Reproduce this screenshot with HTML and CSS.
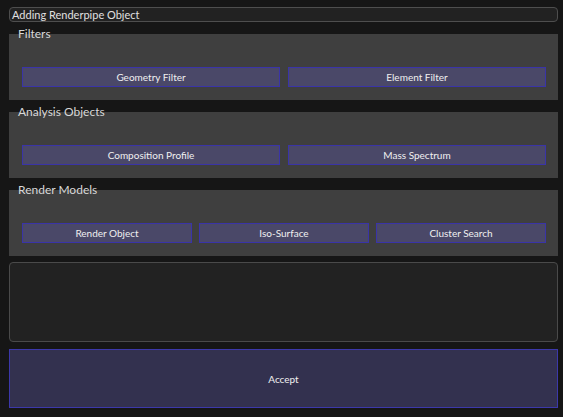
FILE: index.html
```html
<!DOCTYPE html>
<html>
<head>
<meta charset="utf-8">
<link rel="stylesheet" href="styles.css">
</head>
<body>
<div class="dialog">
  <div class="titlebar">Adding Renderpipe Object</div>
  <div class="group">
    <div class="group-label">Filters</div>
    <div class="row">
      <button class="btn">Geometry Filter</button>
      <button class="btn">Element Filter</button>
    </div>
  </div>
  <div class="group">
    <div class="group-label">Analysis Objects</div>
    <div class="row">
      <button class="btn">Composition Profile</button>
      <button class="btn">Mass Spectrum</button>
    </div>
  </div>
  <div class="group">
    <div class="group-label">Render Models</div>
    <div class="row row3">
      <button class="btn">Render Object</button>
      <button class="btn">Iso-Surface</button>
      <button class="btn">Cluster Search</button>
    </div>
  </div>
  <div class="textbox"></div>
  <button class="accept">Accept</button>
</div>
</body>
</html>
```
FILE: styles.css
```css
html, body {
  margin: 0;
  padding: 0;
  background: #161616;
  width: 563px;
  height: 417px;
  overflow: hidden;
  font-family: "Lato", "Noto Sans", sans-serif;
  color: #dcdcdc;
}
.dialog {
  display: flex;
  flex-direction: column;
  width: 549px;
  margin-left: 9px;
  padding-top: 7px;
}
.titlebar {
  box-sizing: border-box;
  height: 15px;
  background: #222222;
  border: 1px solid #4e4e4e;
  border-radius: 4px;
  font-size: 11px;
  line-height: 13px;
  padding-left: 2px;
  color: #e0e0e0;
}
.group {
  background: #3f3f3f;
  margin-top: 12px;
  padding: 0 12px 13px 13px;
}
.group + .group { margin-top: 12px; }
.group-label {
  margin-top: -7px;
  margin-left: -4px;
  height: 14px;
  font-size: 12px;
  line-height: 14px;
  color: #d8d8d8;
}
.row {
  display: grid;
  grid-template-columns: 1fr 1fr;
  gap: 8px;
  margin-top: 26px;
}
.row3 {
  grid-template-columns: 1fr 1fr 1fr;
  gap: 7px;
}
.btn {
  box-sizing: border-box;
  height: 20px;
  margin: 0;
  padding: 0;
  background: #4a4868;
  border: 1px solid #3a34a8;
  color: #f0f0f0;
  font-family: inherit;
  font-size: 10px;
  line-height: 18px;
}
.textbox {
  box-sizing: border-box;
  margin-top: 6px;
  height: 80px;
  background: #222222;
  border: 1px solid #4a4a4a;
  border-radius: 4px;
}
.accept {
  box-sizing: border-box;
  margin: 7px 0 0 0;
  height: 59px;
  padding: 0;
  background: #33314f;
  border: 1px solid #3c38aa;
  color: #f0f0f0;
  font-family: inherit;
  font-size: 10px;
}
```
